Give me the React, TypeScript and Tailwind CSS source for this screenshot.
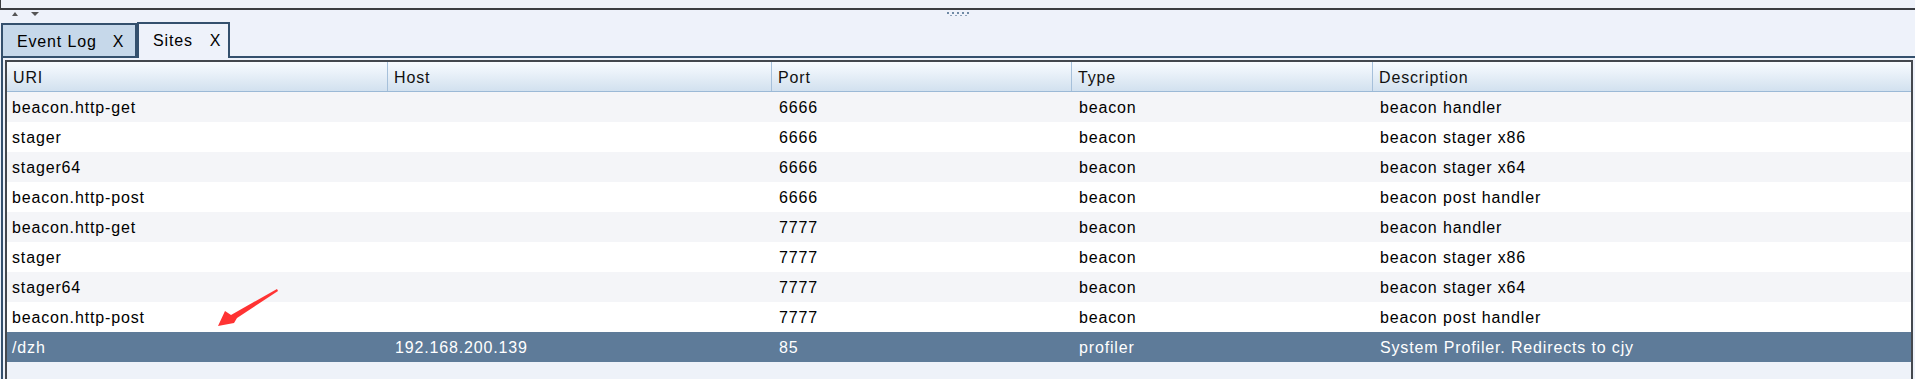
import React from "react";

const rows = [
  ["beacon.http-get", "", "6666", "beacon", "beacon handler"],
  ["stager", "", "6666", "beacon", "beacon stager x86"],
  ["stager64", "", "6666", "beacon", "beacon stager x64"],
  ["beacon.http-post", "", "6666", "beacon", "beacon post handler"],
  ["beacon.http-get", "", "7777", "beacon", "beacon handler"],
  ["stager", "", "7777", "beacon", "beacon stager x86"],
  ["stager64", "", "7777", "beacon", "beacon stager x64"],
  ["beacon.http-post", "", "7777", "beacon", "beacon post handler"],
  ["/dzh", "192.168.200.139", "85", "profiler", "System Profiler. Redirects to cjy"],
];

const headers = ["URI", "Host", "Port", "Type", "Description"];
const cols = "grid grid-cols-[381px_384px_300px_301px_1fr]";

function Grip() {
  return (
    <div className="flex flex-col gap-[1px]">
      <div className="flex gap-[3px]">
        {[0, 1, 2, 3, 4].map((i) => (
          <div key={i} className="w-[2px] h-[2px] bg-[#6f8aa5]" />
        ))}
      </div>
      <div className="flex gap-[3px] pl-[3px]">
        {[0, 1, 2, 3].map((i) => (
          <div key={i} className="w-[2px] h-[1px] bg-[#8ea3ba]" />
        ))}
      </div>
    </div>
  );
}

function App() {
  return (
    <div className="relative w-full h-[379px] overflow-hidden bg-[#eef2fa] font-['Liberation_Sans',Arial,sans-serif] text-[16px] tracking-[0.85px] text-black">
      {/* upper panel edge */}
      <div className="h-[10px] border-l border-b-2 border-[#3a3d42]" />

      {/* split divider */}
      <div className="h-[12px] grid grid-cols-[1fr_auto_1fr] items-start">
        <div className="flex gap-[13px] pl-[12px] pt-[2px]">
          <svg width="6" height="4" viewBox="0 0 6 4">
            <polygon points="3,0 6,4 0,4" fill="#555" />
          </svg>
          <svg width="8" height="4" viewBox="0 0 8 4">
            <polygon points="0,0 8,0 4,4" fill="#555" />
          </svg>
        </div>
        <div className="pt-[2px]">
          <Grip />
        </div>
        <div />
      </div>

      {/* tab strip */}
      <div className="h-[36px] flex items-end pl-[1px]">
        <div className="w-[136px] h-[35px] border-2 border-[#34506d] bg-[#c6d8ea] flex items-center pl-[14px] pt-[2px]">
          <span>Event Log</span>
          <span className="ml-[16px]">X</span>
        </div>
        <div className="w-[93px] h-[36px] border-2 border-b-0 border-[#34506d] bg-[#eef2fa] flex items-center pl-[14px] pb-[1px]">
          <span>Sites</span>
          <span className="ml-[17px]">X</span>
        </div>
        <div className="flex-1 border-b-2 border-[#34506d]" />
      </div>

      {/* tab content */}
      <div className="h-[330px] border-l-2 border-[#34506d] ml-[1px] pl-[2px] pt-[2px]">
        <div className="h-full mr-[2px] border-2 border-b-0 border-[#44484e] bg-[#eef2f9]">
          <div className={`${cols} h-[30px] bg-gradient-to-b from-[#f8fbff] to-[#d2e1ef] border-b border-[#9bb9d6]`}>
            {headers.map((h, i) => (
              <div
                key={h}
                className={`flex items-center pl-[6px] pt-[2px] text-[#111] ${i < 4 ? "border-r border-[#a6c0da]" : ""}`}
              >
                {h}
              </div>
            ))}
          </div>
          {rows.map((r, ri) => {
            const selected = ri === rows.length - 1;
            const bg = selected
              ? "bg-[#5e7b99] text-white"
              : ri % 2 === 0
              ? "bg-[#f4f5f8]"
              : "bg-white";
            return (
              <div key={ri} className={`${cols} h-[30px] ${bg}`}>
                {r.map((c, ci) => (
                  <div key={ci} className={`flex items-center pt-[2px] ${ci === 0 ? "pl-[5px]" : "pl-[7px]"}`}>
                    {c}
                  </div>
                ))}
              </div>
            );
          })}
        </div>
      </div>

      {/* red annotation arrow */}
      <svg className="absolute left-[200px] top-[270px]" width="100" height="70" viewBox="0 0 100 70">
        <polygon
          points="77,19 78,21 37,48 34,53 18,56 25,41 31,45"
          fill="#ff3333"
        />
      </svg>
    </div>
  );
}

export default App;
